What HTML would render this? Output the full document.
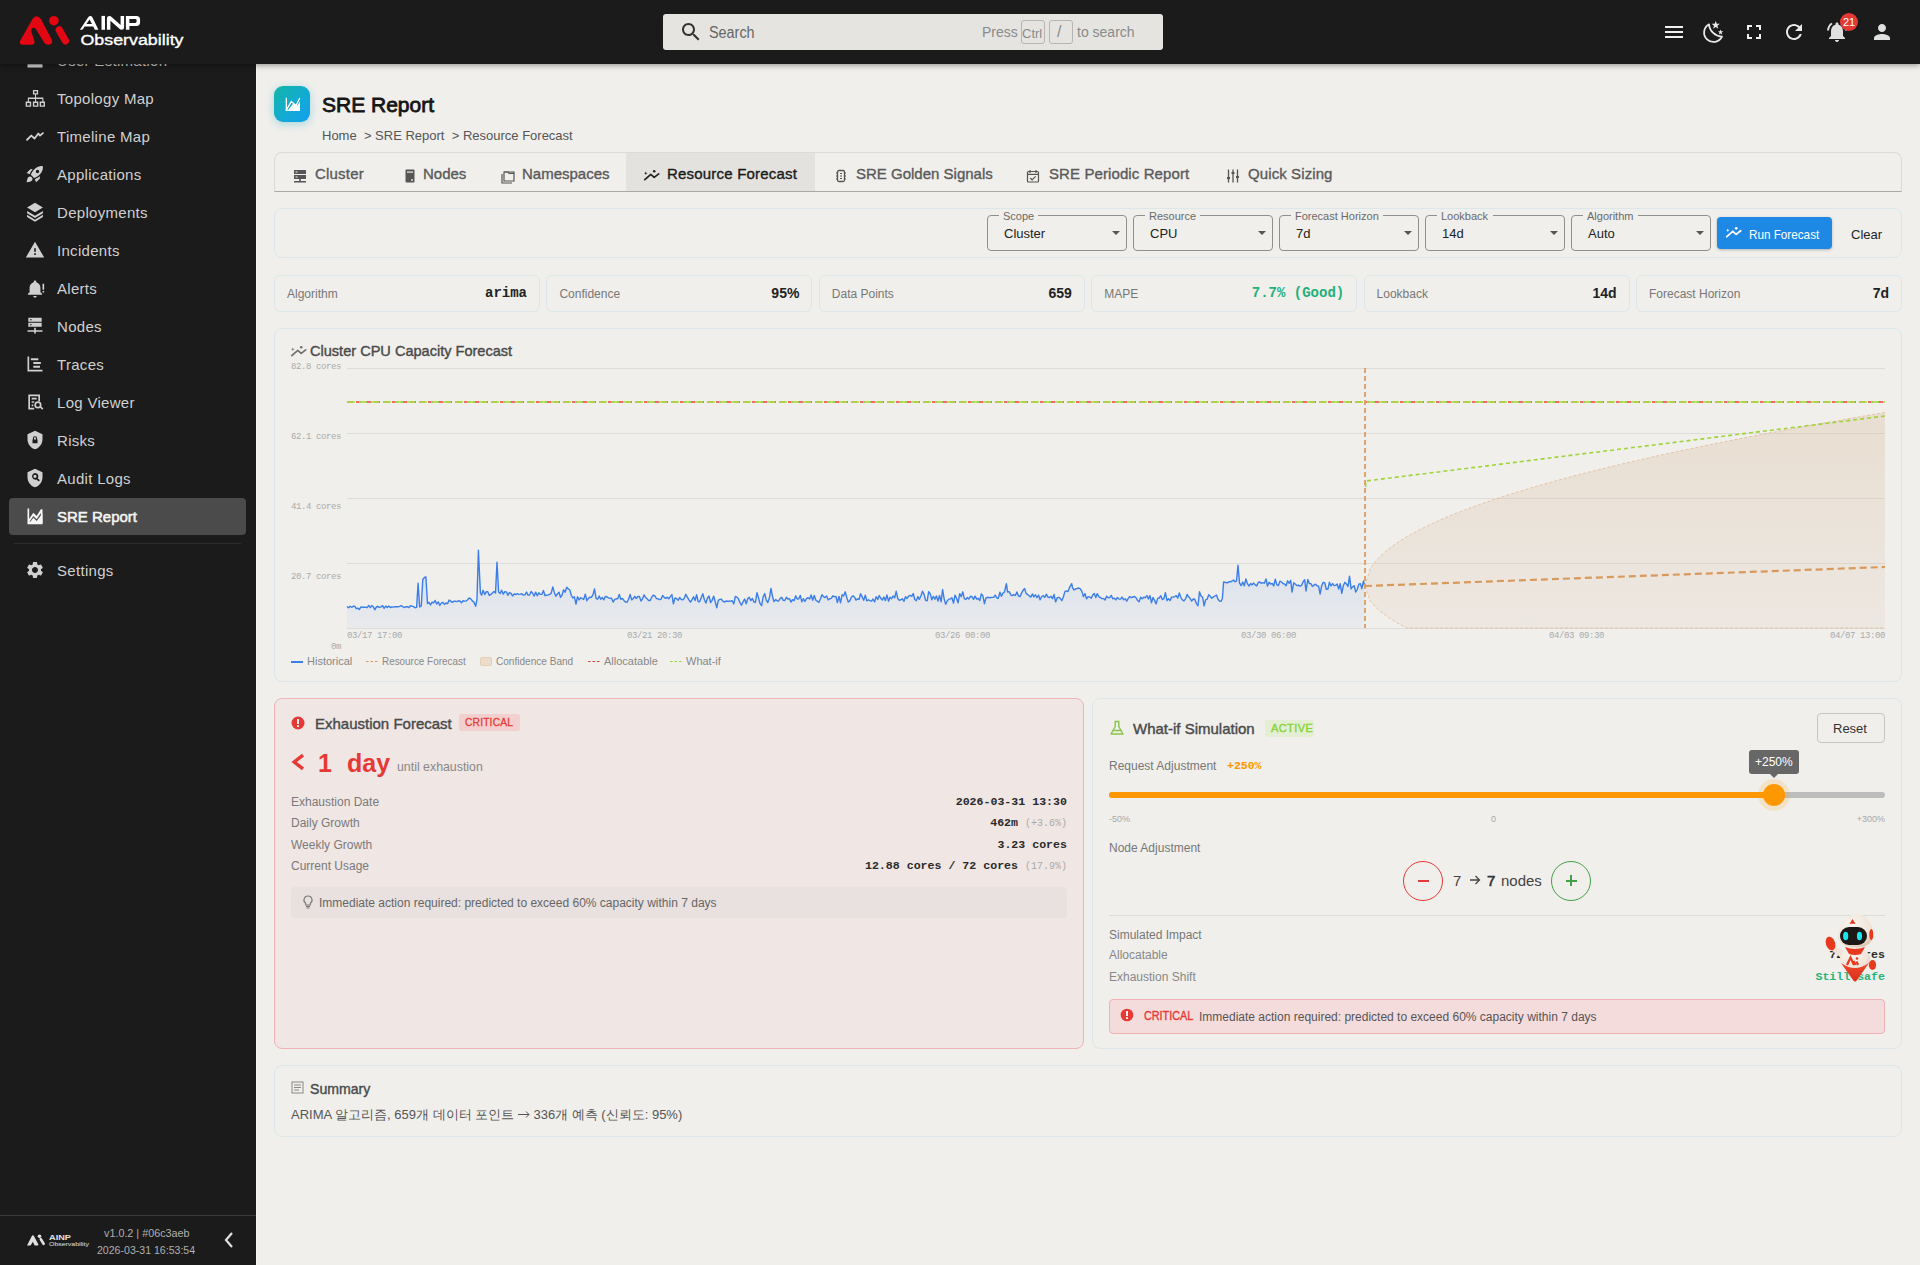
<!DOCTYPE html>
<html><head><meta charset="utf-8">
<style>
*{box-sizing:border-box;margin:0;padding:0}
html,body{width:1920px;height:1265px;overflow:hidden;background:#f0efec;font-family:"Liberation Sans",sans-serif;color:#222;position:relative}
.a{position:absolute}
.t{position:absolute;white-space:nowrap;line-height:1}
#hdr{position:absolute;left:0;top:0;width:1920px;height:64px;background:#1b1b1b;z-index:10;box-shadow:0 1px 6px rgba(0,0,0,.42)}
#side{position:absolute;left:0;top:0;width:257px;height:1265px;background:#1b1b1b;border-right:1px solid #f7f6f3;overflow:hidden}
.nav{position:absolute;left:9px;width:237px;height:36px;border-radius:4px;color:#d0d0d0;font-size:15px}
.nav svg{position:absolute;left:16px;top:8px;width:20px;height:20px;fill:#d0d0d0}
.nav span{position:absolute;left:48px;top:11px;white-space:nowrap;line-height:1;letter-spacing:.3px}
.nav.act{background:#4b4b4b;color:#f6f6f6;-webkit-text-stroke:.5px #f6f6f6}
.nav.act svg{fill:#f6f6f6}
.nav.act span{letter-spacing:0}
.card{position:absolute;border:1px solid #dce7eb;border-radius:8px}
.mono{font-family:"Liberation Mono",monospace}
.sb{-webkit-text-stroke:.4px currentColor}
.sx{transform-origin:0 50%}
</style></head>
<body>
<!-- HEADER -->
<div id="hdr">
<svg class="a" style="left:0;top:0" width="200" height="64" viewBox="0 0 200 64">
  <path d="M20 41 Q18.8 44.8 23 44.8 L31 44.8 Q35.5 44.8 34.3 40.5 L31.4 32 Q30.8 28 33.3 27.7 Q35 27.6 36.2 29.6 L44.3 42.8 Q45.5 44.8 48.2 44.8 Q53.4 44.6 51.8 39.6 L41 19.3 Q37 13.5 32.8 18.6 Z" fill="#e30613"/>
  <circle cx="53.9" cy="20.7" r="4.8" fill="#e30613"/>
  <path d="M59.3 30 L65.4 40.8" stroke="#e30613" stroke-width="7.4" stroke-linecap="round"/>
  <path d="M79.9 29.8 L88.2 17.2 Q90.3 14.6 92.4 17.2 L98.4 29.8 L94.8 29.8 L93.3 26.6 L84.6 26.6 L83.4 28.4 Q82.6 29.8 81.2 29.8Z M86.4 24 L92 24 L89.6 19.6 Z" fill="#fff" fill-rule="evenodd"/><rect x="101.5" y="15.9" width="3.5" height="13.9" fill="#fff"/><path d="M106.9 29.8 V18.4 Q106.9 15.9 109.4 15.9 Q110.8 15.9 111.6 17 L120.6 25 V15.9 H124.1 V27.4 Q124.1 29.8 121.6 29.8 Q120.3 29.8 119.4 28.8 L110.4 20.7 V29.8Z" fill="#fff"/><path d="M125.9 29.8 V15.9 H136.4 Q140.1 15.9 140.1 19.6 V22.3 Q140.1 26 136.4 26 H129.4 V29.8Z M129.4 19 V22.9 H135.3 Q136.6 22.9 136.6 21.6 V20.3 Q136.6 19 135.3 19Z" fill="#fff" fill-rule="evenodd"/>
  <text x="80.5" y="44.8" font-family="Liberation Sans" font-size="15.5" fill="#fff" stroke="#fff" stroke-width=".35" textLength="103" lengthAdjust="spacingAndGlyphs">Observability</text>
</svg>
<div class="a" style="left:663px;top:14px;width:500px;height:36px;background:#e5e4e1;border-radius:3px"></div>
<svg class="a" style="left:679px;top:20px" width="24" height="24" viewBox="0 0 24 24"><path fill="#333" d="M15.5 14h-.79l-.28-.27C15.41 12.59 16 11.11 16 9.5 16 5.91 13.09 3 9.5 3S3 5.91 3 9.5 5.91 16 9.5 16c1.610 0 3.09-.59 4.23-1.57l.27.28v.79l5 4.99L20.49 19l-4.99-5zm-6 0C7.01 14 5 11.99 5 9.5S7.01 5 9.5 5 14 7.01 14 9.5 11.99 14 9.5 14z"/></svg>
<div class="t sx" style="left:709px;top:25px;font-size:16px;color:#666;transform:scaleX(.9)">Search</div>
<div class="t" style="left:982px;top:25px;font-size:14px;color:#8a8a8a">Press</div>
<div class="a" style="left:1021px;top:20px;width:24px;height:24px;border:1px solid #b5b5b5;border-radius:3px"></div>
<div class="t" style="left:1022px;top:27px;font-size:13px;color:#8a8a8a">Ctrl</div>
<div class="a" style="left:1049px;top:20px;width:24px;height:24px;border:1px solid #b5b5b5;border-radius:3px"></div>
<div class="t" style="left:1057px;top:24px;font-size:16px;color:#8a8a8a">/</div>
<div class="t" style="left:1077px;top:25px;font-size:14px;color:#8a8a8a">to search</div>
<!-- right icons -->
<svg class="a" style="left:1662px;top:20px" width="24" height="24" viewBox="0 0 24 24"><path fill="#f0f0f0" d="M3 18h18v-2H3v2zm0-5h18v-2H3v2zm0-7v2h18V6H3z"/></svg>
<svg class="a" style="left:1702px;top:20px" width="24" height="24" viewBox="0 0 24 24"><path fill="none" stroke="#e8e8e8" stroke-width="1.8" stroke-linejoin="round" d="M7.00 4.30 A9.40 9.40 0 1 0 20.00 16.60 A13.59 13.59 0 0 1 7.00 4.30 Z"/><path fill="#e8e8e8" d="M13.70 0.90 L14.76 3.74 L17.79 3.87 L15.41 5.76 L16.23 8.68 L13.70 7.00 L11.17 8.68 L11.99 5.76 L9.61 3.87 L12.64 3.74Z M18.60 9.40 L19.31 11.23 L21.26 11.33 L19.74 12.57 L20.25 14.47 L18.60 13.40 L16.95 14.47 L17.46 12.57 L15.94 11.33 L17.89 11.23Z"/></svg>
<svg class="a" style="left:1742px;top:20px" width="24" height="24" viewBox="0 0 24 24"><path fill="#f0f0f0" d="M7 14H5v5h5v-2H7v-3zm-2-4h2V7h3V5H5v5zm12 7h-3v2h5v-5h-2v3zM14 5v2h3v3h2V5h-5z"/></svg>
<svg class="a" style="left:1782px;top:20px" width="24" height="24" viewBox="0 0 24 24"><path fill="#e8e8e8" d="M17.65 6.35C16.2 4.9 14.21 4 12 4c-4.42 0-7.99 3.580-7.99 8s3.57 8 7.99 8c3.73 0 6.84-2.55 7.73-6h-2.08c-.82 2.33-3.04 4-5.65 4-3.31 0-6-2.69-6-6s2.69-6 6-6c1.66 0 3.14.69 4.22 1.78L13 11h7V4l-2.35 2.35z"/></svg>
<svg class="a" style="left:1825px;top:20px" width="24" height="24" viewBox="0 0 24 24"><path fill="#e0e0e0" d="M7.58 4.08L6.15 2.65C3.75 4.48 2.17 7.3 2.03 10.5h2c.15-2.65 1.51-4.97 3.55-6.420zm12.39 6.42h2c-.15-3.2-1.73-6.02-4.12-7.85l-1.42 1.43c2.02 1.45 3.39 3.77 3.540 6.42zM18 11c0-3.070-1.64-5.64-4.5-6.32V4c0-.83-.67-1.5-1.5-1.5s-1.5.67-1.5 1.5v.68C7.63 5.36 6 7.92 6 11v5l-2 2v1h16v-1l-2-2v-5zm-6 11c.14 0 .27-.01.4-.04.65-.14 1.18-.58 1.44-1.18.1-.24.15-.5.15-.78h-4c.01 1.1.9 2 2.01 2z"/></svg>
<div class="a" style="left:1840px;top:13px;width:18px;height:18px;border-radius:9px;background:#e53935;color:#fff;font-size:11px;line-height:18px;text-align:center">21</div>
<svg class="a" style="left:1870px;top:20px" width="24" height="24" viewBox="0 0 24 24"><path fill="#e0e0e0" d="M12 12c2.21 0 4-1.79 4-4s-1.79-4-4-4-4 1.79-4 4 1.79 4 4 4zm0 2c-2.67 0-8 1.34-8 4v2h16v-2c0-2.66-5.33-4-8-4z"/></svg>

</div>
<!-- SIDEBAR -->
<div id="side">
<div class="nav" style="top:42px"><svg viewBox="0 0 24 24"><path d="M3 17h18v4H3zM6 9h3v7H6zM11 5h3v11h-3zM16 11h3v5h-3z"/></svg><span>User Estimation</span></div>
<div class="nav" style="top:80px"><svg viewBox="0 0 24 24"><path fill-rule="evenodd" d="M9.5 2.3H15.8V7.9H9.5Z M11.2 4.0V6.2H14.1V4.0Z M12 7.9h1.3v3.5H12z M3.4 11.4H22v1.9H3.4z M3.4 13.3h1.3v3H3.4z M12 13.3h1.3v3H12z M20.8 13.3h1.3v3h-1.3z M0.8 16.2H7.4V22.6H0.8Z M2.5 17.9V20.9H5.7V17.9Z M9.4 16.2H16.0V22.6H9.4Z M11.1 17.9V20.9H14.3V17.9Z M17.6 16.2H24.0V22.6H17.6Z M19.3 17.9V20.9H22.3V17.9Z"/></svg><span>Topology Map</span></div>
<div class="nav" style="top:118px"><svg viewBox="0 0 24 24"><path fill="none" stroke="#d0d0d0" stroke-width="2.2" stroke-linejoin="round" stroke-linecap="round" d="M2.5 16.5l5-5 4 3.5 4.5-6 2 2.5 3.5-3"/></svg><span>Timeline Map</span></div>
<div class="nav" style="top:156px"><svg viewBox="0 0 24 24"><path d="M9.19 6.35c-2.04 2.29-3.44 5.58-3.57 5.89L2 10.69l4.05-4.05c.47-.47 1.15-.68 1.81-.55l1.33.26zM11.17 17s3.74-1.55 5.89-3.7c5.4-5.4 4.5-9.62 4.21-10.57-.95-.3-5.17-1.19-10.57 4.21C8.55 9.09 7 12.83 7 12.83L11.17 17zm6.48-2.19c-2.29 2.04-5.58 3.44-5.89 3.57L13.31 22l4.05-4.05c.47-.47.68-1.150.55-1.81l-.26-1.33zM9 18c0 .83-.34 1.58-.88 2.12C6.94 21.3 2 22 2 22s.7-4.94 1.88-6.12C4.42 15.34 5.17 15 6 15c1.66 0 3 1.34 3 3zm4-9c0-1.1.9-2 2-2s2 .9 2 2-.9 2-2 2-2-.9-2-2z"/></svg><span>Applications</span></div>
<div class="nav" style="top:194px"><svg viewBox="0 0 24 24"><path d="M12 0.8 L21.5 6.6 L12 12.4 L2.5 6.6Z M2.5 10.8 L12 16.6 L21.5 10.8 V13.4 L12 19.2 L2.5 13.4Z M2.5 15.4 L12 21.2 L21.5 15.4 V18 L12 23.8 L2.5 18Z"/></svg><span>Deployments</span></div>
<div class="nav" style="top:232px"><svg viewBox="0 0 24 24"><path d="M1 21h22L12 2 1 21zm12-3h-2v-2h2v2zm0-4h-2v-4h2v4z"/></svg><span>Incidents</span></div>
<div class="nav" style="top:270px"><svg viewBox="0 0 24 24"><path d="M10 21.5c0 1.1.9 2 2 2s2-.9 2-2h-4zM12 3c-.83 0-1.5.67-1.5 1.5v.7C7.6 5.9 5.5 8.4 5.5 11.5V17l-2 2v1h17v-1l-2-2v-5.5c0-3.1-2.1-5.6-5-6.3v-.7C13.5 3.67 12.83 3 12 3z M21 7h2v7h-2z M21 15.5h2v2h-2z"/></svg><span>Alerts</span></div>
<div class="nav" style="top:308px"><svg viewBox="0 0 24 24"><path d="M4 2h16v5H4zM4 8h16v5H4zM11 14h2v3h8v2h-8v2h-2v-2H3v-2h8z"/><path fill="#1b1b1b" d="M6 4h2v1H6zM6 10h2v1H6z"/></svg><span>Nodes</span></div>
<div class="nav" style="top:346px"><svg viewBox="0 0 24 24"><path d="M3 3h2v16h16v2H3zM7 5h9v2.5H7zM10 9.5h9V12h-9zM10 14h8v2.5h-8z"/></svg><span>Traces</span></div>
<div class="nav" style="top:384px"><svg viewBox="0 0 24 24"><path d="M4 3h14v8h-2V5H6v14h5v2H4zM8 7h6v2H8zM8 11h3v2H8zM8 15h2v2H8z"/><circle cx="15.5" cy="15.5" r="3.3" fill="none" stroke="#d0d0d0" stroke-width="2"/><path d="M17.6 18.2l1.4-1.4 3 3-1.4 1.4z"/></svg><span>Log Viewer</span></div>
<div class="nav" style="top:422px"><svg viewBox="0 0 24 24"><path d="M12 1L3 5v6c0 5.55 3.84 10.74 9 12 5.16-1.26 9-6.45 9-12V5l-9-4zm3 15H9v-4.5h.5V10a2.5 2.5 0 0 1 5 0v1.5h.5V16zm-1.8-4.5V10a1.2 1.2 0 0 0-2.4 0v1.5z"/></svg><span>Risks</span></div>
<div class="nav" style="top:460px"><svg viewBox="0 0 24 24"><path d="M12 1L3 5v6c0 5.55 3.84 10.74 9 12 5.16-1.26 9-6.45 9-12V5l-9-4zm0 5a4 4 0 0 1 3.3 6.3l2.4 2.4-1.4 1.4-2.4-2.4A4 4 0 1 1 12 6zm0 2a2 2 0 1 0 0 4 2 2 0 0 0 0-4z"/></svg><span>Audit Logs</span></div>
<div class="nav act" style="top:498px;height:37px"><svg viewBox="0 0 24 24"><path d="M3 3h2v12.5l5-7.5 4 4 5-8h2v18H3zM5 19h14V8.5l-5 7.5-4-4-5 7.5z"/><path d="M5 21l5-7 4 4 7-9v12z"/></svg><span>SRE Report</span></div>
<div class="a" style="left:14px;top:543px;width:227px;height:1px;background:#2c2c2c"></div>
<div class="nav" style="top:552px"><svg viewBox="0 0 24 24"><path d="M19.14 12.94c.04-.3.06-.61.06-.94 0-.32-.02-.64-.07-.94l2.03-1.58c.18-.14.23-.41.12-.61l-1.92-3.32c-.12-.22-.37-.29-.59-.22l-2.39.96c-.5-.38-1.03-.7-1.62-.94l-.36-2.54c-.04-.24-.24-.41-.48-.41h-3.84c-.24 0-.43.17-.47.41l-.36 2.54c-.59.24-1.13.57-1.62.94l-2.39-.96c-.22-.08-.47 0-.59.22L2.74 8.87c-.12.21-.08.47.12.61l2.03 1.58c-.05.3-.09.63-.09.94s.02.64.07.94l-2.03 1.58c-.18.14-.23.41-.12.61l1.92 3.32c.12.22.37.29.59.22l2.39-.96c.5.38 1.03.7 1.62.94l.36 2.54c.05.24.24.41.48.41h3.84c.24 0 .44-.17.47-.41l.36-2.54c.59-.24 1.13-.56 1.62-.94l2.39.96c.22.08.47 0 .59-.22l1.92-3.32c.12-.22.07-.47-.12-.61l-2.01-1.58zM12 15.6c-1.98 0-3.6-1.62-3.6-3.6s1.62-3.6 3.6-3.6 3.6 1.62 3.6 3.6-1.62 3.6-3.6 3.6z"/></svg><span>Settings</span></div>
<!-- footer -->
<div class="a" style="left:0;top:1215px;width:256px;height:1px;background:#3a3a3a"></div>
<svg class="a" style="left:26px;top:1232px" width="66" height="16" viewBox="0 0 66 16">
  <path d="M1 13.6 L5.6 4.5 Q6.9 2.2 8.2 4.5 L12.3 12.3 Q12.8 13.6 11.3 13.6 L9.6 13.6 Q8.7 13.6 8.2 12.7 L6.9 9.8 L4.9 13 Q4.5 13.6 3.6 13.6 Z" fill="#e0e0e0"/>
  <circle cx="13.5" cy="4.3" r="1.8" fill="#e0e0e0"/>
  <path d="M14.8 7.2 L17.6 11.8" stroke="#e0e0e0" stroke-width="2.6" stroke-linecap="round"/>
  <text x="23" y="8" font-family="Liberation Sans" font-weight="bold" font-size="7" fill="#e0e0e0" textLength="22" lengthAdjust="spacingAndGlyphs">AINP</text>
  <text x="23" y="14" font-family="Liberation Sans" font-size="6" fill="#e0e0e0" textLength="40" lengthAdjust="spacingAndGlyphs">Observability</text>
</svg>
<div class="t sx" style="left:104px;top:1228px;font-size:11px;color:#b0b0b0;transform:scaleX(.98)">v1.0.2 | #06c3aeb</div>
<div class="t sx" style="left:97px;top:1245px;font-size:11px;color:#b0b0b0;transform:scaleX(.96)">2026-03-31 16:53:54</div>
<svg class="a" style="left:220px;top:1230px" width="18" height="20" viewBox="0 0 18 20"><path d="M12 3 L6 10 L12 17" fill="none" stroke="#e0e0e0" stroke-width="2.2"/></svg>

</div>
<!-- CONTENT -->
<!-- page title -->
<div class="a" style="left:274px;top:86px;width:36px;height:36px;border-radius:9px;background:linear-gradient(135deg,#14b5a6 0%,#13a9d6 60%,#129ff0 100%);box-shadow:0 2px 8px rgba(20,170,190,.35)"></div>
<svg class="a" style="left:284px;top:96px" width="18" height="18" viewBox="0 0 18 18"><rect x="1.7" y="1.8" width="1.3" height="13.1" fill="#fff"/><path d="M2.6 13.6 L7.3 5.6 L12 9.5 L15.8 2" fill="none" stroke="#fff" stroke-width="1.3"/><path d="M3.5 14.9 L9.2 7.6 L13.2 9.6 L16 5.6 V14.9 Z" fill="#fff"/><rect x="1.7" y="13.8" width="14.3" height="1.1" fill="#fff"/></svg>
<div class="t" style="left:322px;top:94px;font-size:21px;color:#151515;-webkit-text-stroke:.8px #151515">SRE Report</div>
<div class="t" style="left:322px;top:129px;font-size:13px;color:#555">Home &nbsp;&gt; SRE Report &nbsp;&gt; Resource Forecast</div>

<!-- tabs -->
<div class="a" style="left:274px;top:152px;width:1628px;height:40px;border:1px solid #dcdbd8;border-bottom:1px solid #a8a8a6;border-radius:8px 8px 0 0"></div>
<div class="a" style="left:626px;top:153px;width:189px;height:38px;background:#e3e2de"></div>
<svg class="a" style="left:292px;top:168px" width="16" height="16" viewBox="0 0 16 16"><path d="M2 2h12v4H2zM2 7h12v4H2zM7.2 11h1.6v2H14v1.5H2V13h5.2z" fill="#555"/><path d="M3.5 3.5h2v1h-2zM3.5 8.5h2v1h-2z" fill="#f0efec"/></svg>
<div class="t" style="left:315px;top:166px;font-size:15px;letter-spacing:.2px;color:#5a5a5a;-webkit-text-stroke:.35px #5a5a5a">Cluster</div>
<svg class="a" style="left:402px;top:168px" width="16" height="16" viewBox="0 0 16 16"><path d="M4.5 1.5h7a1 1 0 0 1 1 1v11a1 1 0 0 1-1 1h-7a1 1 0 0 1-1-1v-11a1 1 0 0 1 1-1z" fill="#555"/><path d="M5 3.5h6v1.2H5z" fill="#f0efec"/><circle cx="10" cy="12" r=".9" fill="#f0efec"/></svg>
<div class="t" style="left:423px;top:166px;font-size:15px;letter-spacing:0px;color:#5a5a5a;-webkit-text-stroke:.35px #5a5a5a">Nodes</div>
<svg class="a" style="left:500px;top:168px" width="16" height="16" viewBox="0 0 16 16"><path d="M4 4h10v9H4z M2 6v9h10" fill="none" stroke="#555" stroke-width="1.2"/><path d="M4 4h4l1 1.3h5" fill="none" stroke="#555" stroke-width="1.2"/></svg>
<div class="t" style="left:522px;top:166px;font-size:15px;letter-spacing:0px;color:#5a5a5a;-webkit-text-stroke:.35px #5a5a5a">Namespaces</div>
<svg class="a" style="left:642px;top:167px" width="20" height="16" viewBox="0 0 20 16"><path d="M2.8 12.7 L8.8 7.3 L12.2 10.3 L16.7 6.8" fill="none" stroke="#222" stroke-width="1.7" stroke-linecap="round" stroke-linejoin="round"/><circle cx="12.2" cy="4.3" r="1.3" fill="#222"/><path d="M3.8 4.6 L4.3 5.8 L5.5 6.3 L4.3 6.8 L3.8 8 L3.3 6.8 L2.1 6.3 L3.3 5.8Z" fill="#222"/></svg>
<div class="t" style="left:667px;top:166px;font-size:15px;letter-spacing:.2px;color:#1a1a1a;-webkit-text-stroke:.35px #1a1a1a">Resource Forecast</div>
<svg class="a" style="left:833px;top:168px" width="16" height="16" viewBox="0 0 16 16"><rect x="4.5" y="2.5" width="7" height="11" rx="1.5" fill="none" stroke="#555" stroke-width="1.3"/><path d="M3 5h2M3 8h2M3 11h2M11 5h2M11 8h2M11 11h2M7 5.5h2M7 8h2M7 10.5h2" stroke="#555" stroke-width="1.1"/></svg>
<div class="t" style="left:856px;top:166px;font-size:15px;letter-spacing:0px;color:#5a5a5a;-webkit-text-stroke:.35px #5a5a5a">SRE Golden Signals</div>
<svg class="a" style="left:1025px;top:168px" width="16" height="16" viewBox="0 0 16 16"><rect x="2.5" y="3.5" width="11" height="10.5" rx="1" fill="none" stroke="#555" stroke-width="1.2"/><path d="M2.5 6.3h11M5 2v3M11 2v3M5.3 10l1.8 1.8 3.5-3.5" fill="none" stroke="#555" stroke-width="1.2"/></svg>
<div class="t" style="left:1049px;top:166px;font-size:15px;letter-spacing:.1px;color:#5a5a5a;-webkit-text-stroke:.35px #5a5a5a">SRE Periodic Report</div>
<svg class="a" style="left:1225px;top:168px" width="16" height="16" viewBox="0 0 16 16"><path d="M3.5 1.5v13M8 1.5v13M12.5 1.5v13" stroke="#555" stroke-width="1.3"/><path d="M2 10h3M6.5 5h3M11 9h3" stroke="#555" stroke-width="2"/></svg>
<div class="t" style="left:1248px;top:166px;font-size:15px;letter-spacing:.1px;color:#5a5a5a;-webkit-text-stroke:.35px #5a5a5a">Quick Sizing</div>


<!-- controls -->
<div class="card" style="left:274px;top:208px;width:1628px;height:50px"></div>
<div class="a" style="left:987px;top:215px;width:140px;height:36px;border:1px solid #8f8f8f;border-radius:4px"></div>
<div class="a" style="left:999px;top:212px;width:39px;height:6px;background:#f0efec"></div>
<div class="t" style="left:1003px;top:211px;font-size:11px;color:#6a6a6a">Scope</div>
<div class="t" style="left:1004px;top:227px;font-size:13px;color:#222">Cluster</div>
<svg class="a" style="left:1112px;top:231px" width="8" height="5" viewBox="0 0 8 5"><path d="M0 0h8L4 4z" fill="#555"/></svg>
<div class="a" style="left:1133px;top:215px;width:140px;height:36px;border:1px solid #8f8f8f;border-radius:4px"></div>
<div class="a" style="left:1145px;top:212px;width:55px;height:6px;background:#f0efec"></div>
<div class="t" style="left:1149px;top:211px;font-size:11px;color:#6a6a6a">Resource</div>
<div class="t" style="left:1150px;top:227px;font-size:13px;color:#222">CPU</div>
<svg class="a" style="left:1258px;top:231px" width="8" height="5" viewBox="0 0 8 5"><path d="M0 0h8L4 4z" fill="#555"/></svg>
<div class="a" style="left:1279px;top:215px;width:140px;height:36px;border:1px solid #8f8f8f;border-radius:4px"></div>
<div class="a" style="left:1291px;top:212px;width:92px;height:6px;background:#f0efec"></div>
<div class="t" style="left:1295px;top:211px;font-size:11px;color:#6a6a6a">Forecast Horizon</div>
<div class="t" style="left:1296px;top:227px;font-size:13px;color:#222">7d</div>
<svg class="a" style="left:1404px;top:231px" width="8" height="5" viewBox="0 0 8 5"><path d="M0 0h8L4 4z" fill="#555"/></svg>
<div class="a" style="left:1425px;top:215px;width:140px;height:36px;border:1px solid #8f8f8f;border-radius:4px"></div>
<div class="a" style="left:1437px;top:212px;width:56px;height:6px;background:#f0efec"></div>
<div class="t" style="left:1441px;top:211px;font-size:11px;color:#6a6a6a">Lookback</div>
<div class="t" style="left:1442px;top:227px;font-size:13px;color:#222">14d</div>
<svg class="a" style="left:1550px;top:231px" width="8" height="5" viewBox="0 0 8 5"><path d="M0 0h8L4 4z" fill="#555"/></svg>
<div class="a" style="left:1571px;top:215px;width:140px;height:36px;border:1px solid #8f8f8f;border-radius:4px"></div>
<div class="a" style="left:1583px;top:212px;width:55px;height:6px;background:#f0efec"></div>
<div class="t" style="left:1587px;top:211px;font-size:11px;color:#6a6a6a">Algorithm</div>
<div class="t" style="left:1588px;top:227px;font-size:13px;color:#222">Auto</div>
<svg class="a" style="left:1696px;top:231px" width="8" height="5" viewBox="0 0 8 5"><path d="M0 0h8L4 4z" fill="#555"/></svg>

<div class="a" style="left:1717px;top:217px;width:115px;height:32px;background:#1e88e5;border-radius:4px;box-shadow:0 1px 3px rgba(0,0,0,.25)"></div>
<svg class="a" style="left:1724px;top:224px" width="20" height="16" viewBox="0 0 20 16"><path d="M2.8 12.7 L8.8 7.3 L12.2 10.3 L16.7 6.8" fill="none" stroke="#fff" stroke-width="1.8" stroke-linecap="round" stroke-linejoin="round"/><circle cx="12.2" cy="4.3" r="1.4" fill="#fff"/><path d="M3.8 4.6 L4.3 5.8 L5.5 6.3 L4.3 6.8 L3.8 8 L3.3 6.8 L2.1 6.3 L3.3 5.8Z" fill="#fff"/></svg>
<div class="t sx" style="left:1749px;top:228px;font-size:13px;color:#fff;transform:scaleX(.9)">Run Forecast</div>
<div class="t" style="left:1851px;top:228px;font-size:13px;color:#222">Clear</div>

<!-- stats -->
<div class="card" style="left:274.0px;top:275px;width:266px;height:37px;border-radius:6px"></div>
<div class="t" style="left:287.0px;top:288px;font-size:12px;color:#777">Algorithm</div>
<div class="t" style="left:287.0px;top:286px;width:240px;text-align:right;font-size:14px;font-weight:bold;color:#222;font-family:'Liberation Mono',monospace;">arima</div>
<div class="card" style="left:546.4px;top:275px;width:266px;height:37px;border-radius:6px"></div>
<div class="t" style="left:559.4px;top:288px;font-size:12px;color:#777">Confidence</div>
<div class="t" style="left:559.4px;top:286px;width:240px;text-align:right;font-size:14px;font-weight:bold;color:#222;">95%</div>
<div class="card" style="left:818.8px;top:275px;width:266px;height:37px;border-radius:6px"></div>
<div class="t" style="left:831.8px;top:288px;font-size:12px;color:#777">Data Points</div>
<div class="t" style="left:831.8px;top:286px;width:240px;text-align:right;font-size:14px;font-weight:bold;color:#222;">659</div>
<div class="card" style="left:1091.2px;top:275px;width:266px;height:37px;border-radius:6px"></div>
<div class="t" style="left:1104.2px;top:288px;font-size:12px;color:#777">MAPE</div>
<div class="t" style="left:1104.2px;top:286px;width:240px;text-align:right;font-size:14px;font-weight:bold;color:#22b07a;font-family:'Liberation Mono',monospace;">7.7% (Good)</div>
<div class="card" style="left:1363.6px;top:275px;width:266px;height:37px;border-radius:6px"></div>
<div class="t" style="left:1376.6px;top:288px;font-size:12px;color:#777">Lookback</div>
<div class="t" style="left:1376.6px;top:286px;width:240px;text-align:right;font-size:14px;font-weight:bold;color:#222;">14d</div>
<div class="card" style="left:1636.0px;top:275px;width:266px;height:37px;border-radius:6px"></div>
<div class="t" style="left:1649.0px;top:288px;font-size:12px;color:#777">Forecast Horizon</div>
<div class="t" style="left:1649.0px;top:286px;width:240px;text-align:right;font-size:14px;font-weight:bold;color:#222;">7d</div>


<!-- chart card -->
<div class="card" style="left:274px;top:328px;width:1628px;height:354px"></div>
<svg class="a" style="left:288.6px;top:343px" width="20" height="16" viewBox="0 0 20 16"><path d="M2.8 12.7 L8.8 7.3 L12.2 10.3 L16.7 6.8" fill="none" stroke="#707070" stroke-width="1.7" stroke-linecap="round" stroke-linejoin="round"/><circle cx="12.2" cy="4.3" r="1.3" fill="#707070"/><path d="M3.8 4.6 L4.3 5.8 L5.5 6.3 L4.3 6.8 L3.8 8 L3.3 6.8 L2.1 6.3 L3.3 5.8Z" fill="#707070"/></svg>
<div class="t sb sx" style="left:310px;top:343px;font-size:15px;color:#4a4a4a;transform:scaleX(.97)">Cluster CPU Capacity Forecast</div>
<svg class="a" style="left:0;top:0" width="1920" height="700" viewBox="0 0 1920 700">
<defs><linearGradient id="hg" x1="0" y1="0" x2="0" y2="1"><stop offset="0" stop-color="#5b8def" stop-opacity=".16"/><stop offset="1" stop-color="#5b8def" stop-opacity=".05"/></linearGradient><linearGradient id="bg" gradientUnits="userSpaceOnUse" x1="0" y1="413" x2="0" y2="628"><stop offset="0" stop-color="#d8b896" stop-opacity=".32"/><stop offset="1" stop-color="#dcc0a8" stop-opacity=".16"/></linearGradient></defs>
<line x1="347" x2="1885" y1="368.5" y2="368.5" stroke="#dddcd8" stroke-width="1"/>
<line x1="347" x2="1885" y1="433.5" y2="433.5" stroke="#dddcd8" stroke-width="1"/>
<line x1="347" x2="1885" y1="498.5" y2="498.5" stroke="#dddcd8" stroke-width="1"/>
<line x1="347" x2="1885" y1="563.5" y2="563.5" stroke="#dddcd8" stroke-width="1"/>
<line x1="347" x2="1885" y1="628.5" y2="628.5" stroke="#dddcd8" stroke-width="1"/>
<path d="M347.0 606.4 L348.5 607.8 L350.1 606.2 L351.6 607.3 L353.2 606.3 L354.7 606.2 L356.3 608.7 L357.8 608.1 L359.4 609.5 L360.9 606.9 L362.5 607.2 L364.0 607.2 L365.6 607.3 L367.1 607.6 L368.7 605.4 L370.2 607.6 L371.8 605.6 L373.3 606.9 L374.8 609.8 L376.4 606.8 L377.9 606.5 L379.5 607.3 L381.0 606.8 L382.6 605.7 L384.1 608.3 L385.7 606.1 L387.2 607.4 L388.8 606.0 L390.3 607.6 L391.9 607.0 L393.4 607.1 L395.0 606.8 L396.5 606.8 L398.1 606.7 L399.6 606.4 L401.1 605.7 L402.7 606.7 L404.2 607.5 L405.8 606.8 L407.3 606.7 L408.9 607.6 L410.4 605.7 L412.0 606.1 L413.5 606.6 L415.1 607.8 L416.6 607.4 L418.1 583.3 L419.6 607.0 L421.3 605.9 L422.8 579.5 L424.4 577.5 L425.9 577.0 L427.5 603.6 L429.0 602.4 L430.5 605.0 L432.1 602.1 L433.6 602.9 L435.2 600.4 L436.7 604.0 L438.3 601.8 L439.8 605.4 L441.4 603.2 L442.9 602.3 L444.5 604.4 L446.0 603.0 L447.6 603.7 L449.1 600.0 L450.7 601.1 L452.2 602.4 L453.8 601.3 L455.3 601.2 L456.8 601.6 L458.4 600.8 L459.9 601.0 L461.5 602.7 L463.0 600.8 L464.6 601.1 L466.1 601.0 L467.7 599.8 L469.2 597.9 L470.8 598.8 L472.3 600.9 L473.9 602.1 L475.7 606.3 L477.0 599.2 L478.4 550.2 L480.4 592.8 L481.6 595.2 L483.1 590.3 L484.7 594.6 L486.2 591.8 L487.8 591.8 L489.3 595.4 L490.9 594.4 L492.4 592.9 L494.0 591.4 L495.5 593.1 L497.0 562.3 L498.6 591.9 L500.2 593.4 L501.7 590.2 L503.3 594.2 L504.8 591.6 L506.4 591.9 L507.9 595.3 L509.4 592.5 L511.0 593.4 L512.5 596.0 L514.1 593.8 L515.6 594.6 L517.2 593.7 L518.7 594.4 L520.3 594.1 L521.8 593.7 L523.4 595.1 L524.9 594.9 L526.5 592.0 L528.0 595.1 L529.6 595.0 L531.1 591.5 L532.7 593.2 L534.2 596.1 L535.7 592.1 L537.3 595.8 L538.8 592.8 L540.4 594.4 L541.9 594.4 L543.5 590.6 L545.0 595.5 L546.6 595.2 L548.1 594.9 L549.7 594.4 L551.2 593.2 L552.8 586.9 L554.3 592.4 L555.9 596.2 L557.4 594.0 L559.0 592.2 L560.5 597.3 L562.0 595.2 L563.6 589.8 L565.1 592.2 L566.7 587.3 L568.2 588.8 L569.8 590.0 L571.3 595.3 L572.9 598.0 L574.4 596.8 L576.0 604.0 L577.5 596.7 L579.1 599.9 L580.6 597.7 L582.2 598.6 L583.7 599.4 L585.3 594.2 L586.8 600.7 L588.3 598.5 L589.9 597.1 L591.4 597.4 L593.0 594.6 L594.5 588.9 L596.1 598.3 L597.6 599.2 L599.2 596.1 L600.7 599.3 L602.3 597.4 L603.8 599.8 L605.4 596.4 L606.9 596.8 L608.5 597.8 L610.0 598.3 L611.6 598.3 L613.1 602.1 L614.7 599.3 L616.2 598.8 L617.7 598.8 L619.3 594.4 L620.8 599.3 L622.4 598.4 L623.9 600.4 L625.5 602.1 L627.0 602.3 L628.6 599.2 L630.1 594.4 L631.7 599.9 L633.2 598.5 L634.8 596.3 L636.3 598.5 L637.9 596.4 L639.4 596.5 L641.0 601.0 L642.5 598.8 L644.0 594.9 L645.6 597.5 L647.1 598.8 L648.7 600.5 L650.2 600.5 L651.8 597.0 L653.3 595.2 L654.9 595.9 L656.4 598.5 L658.0 598.9 L659.5 599.7 L661.1 599.1 L662.6 595.4 L664.2 597.3 L665.7 598.3 L667.3 597.2 L668.8 598.8 L670.3 596.6 L671.9 594.6 L673.4 603.8 L675.0 598.0 L676.5 598.6 L678.1 600.3 L679.6 597.6 L681.2 599.3 L682.7 599.9 L684.3 598.2 L685.8 594.3 L687.4 597.1 L688.9 599.8 L690.5 602.2 L692.0 599.7 L693.6 596.8 L695.1 600.5 L696.6 594.7 L698.2 601.7 L699.7 601.6 L701.3 597.6 L702.8 593.7 L704.4 599.8 L705.9 603.0 L707.5 598.0 L709.0 596.0 L710.6 602.5 L712.1 600.3 L713.7 596.1 L715.2 601.7 L716.8 607.7 L718.3 600.4 L719.9 599.4 L721.4 599.3 L722.9 601.2 L724.5 602.1 L726.0 601.0 L727.6 601.3 L729.1 601.2 L730.7 601.0 L732.2 600.7 L733.8 603.9 L735.3 596.5 L736.9 597.1 L738.4 598.8 L740.0 602.7 L741.5 605.2 L743.1 601.7 L744.6 599.0 L746.2 603.8 L747.7 598.7 L749.2 597.2 L750.8 600.6 L752.3 598.4 L753.9 602.0 L755.4 602.4 L757.0 592.7 L758.5 597.9 L760.1 603.7 L761.6 605.7 L763.2 596.7 L764.7 593.5 L766.3 600.2 L767.8 602.6 L769.4 598.0 L771.0 588.4 L772.5 596.5 L774.0 601.5 L775.6 599.7 L777.1 600.7 L778.6 601.0 L780.2 598.3 L781.7 597.3 L783.3 600.4 L784.8 600.5 L786.4 597.2 L787.9 599.1 L789.5 598.6 L791.0 602.1 L792.6 599.7 L794.1 600.7 L795.7 595.8 L797.2 599.0 L798.8 598.8 L800.3 595.4 L801.9 601.8 L803.4 598.7 L804.9 601.5 L806.5 598.6 L808.0 597.7 L809.6 598.9 L811.1 595.0 L812.7 600.2 L814.2 595.4 L815.8 600.1 L817.3 601.2 L818.9 602.3 L820.4 599.0 L822.0 594.7 L823.5 596.6 L825.1 597.6 L826.6 596.1 L828.2 599.9 L829.7 598.8 L831.2 598.4 L832.8 596.0 L834.3 596.6 L835.9 596.5 L837.4 602.6 L839.0 596.4 L840.5 602.8 L842.1 594.7 L843.6 595.9 L845.2 591.8 L846.7 597.2 L848.3 602.0 L849.8 600.9 L851.4 597.2 L852.9 595.9 L854.5 597.0 L856.0 600.1 L857.5 598.8 L859.1 599.3 L860.6 593.7 L862.2 596.9 L863.7 600.3 L865.3 595.1 L866.8 600.8 L868.4 599.8 L869.9 600.6 L871.5 601.1 L873.0 599.0 L874.6 601.9 L876.1 596.7 L877.7 599.5 L879.2 595.5 L880.8 598.3 L882.3 600.1 L883.8 597.0 L885.4 600.6 L886.9 595.0 L888.5 601.2 L890.0 597.3 L891.6 598.8 L893.1 595.9 L894.7 597.7 L896.2 591.3 L897.8 598.7 L899.3 600.2 L900.9 599.8 L902.4 598.7 L904.0 601.3 L905.5 596.6 L907.1 598.5 L908.6 596.1 L910.1 595.4 L911.7 596.3 L913.2 593.5 L914.8 599.5 L916.3 600.7 L917.9 596.6 L919.4 599.3 L921.0 595.8 L922.5 591.2 L924.1 594.6 L925.6 600.4 L927.2 600.7 L928.7 591.7 L930.3 593.9 L931.8 599.7 L933.4 596.3 L934.9 599.3 L936.4 596.0 L938.0 601.0 L939.5 595.4 L941.1 601.7 L942.6 589.5 L944.2 599.1 L945.7 604.2 L947.3 600.7 L948.8 599.3 L950.4 598.9 L951.9 597.7 L953.5 603.0 L955.0 595.1 L956.6 598.4 L958.1 602.8 L959.7 593.6 L961.2 596.7 L962.8 591.8 L964.3 598.7 L965.8 599.5 L967.4 597.5 L968.9 598.9 L970.5 596.3 L972.0 596.7 L973.6 599.3 L975.1 596.1 L976.7 599.1 L978.2 598.3 L979.8 600.6 L981.3 593.9 L982.9 595.8 L984.4 603.7 L986.0 597.8 L987.5 597.3 L989.1 597.7 L990.6 597.5 L992.1 597.4 L993.7 597.3 L995.2 595.1 L996.8 598.0 L998.3 598.2 L999.9 592.1 L1001.4 596.3 L1003.0 593.1 L1004.5 592.0 L1006.4 583.7 L1007.6 592.0 L1009.2 591.6 L1010.7 594.8 L1012.3 595.6 L1013.8 594.6 L1015.4 595.5 L1016.9 591.9 L1018.4 595.8 L1020.0 596.6 L1021.5 593.2 L1023.1 590.2 L1024.6 588.5 L1026.2 593.6 L1027.7 594.4 L1029.3 595.9 L1030.8 597.1 L1032.4 593.9 L1033.9 596.9 L1035.5 594.7 L1037.0 597.7 L1038.6 595.1 L1040.1 599.8 L1041.7 596.5 L1043.2 595.6 L1044.7 597.4 L1046.3 594.2 L1047.8 597.0 L1049.4 597.5 L1050.9 596.2 L1052.5 598.7 L1054.0 594.5 L1055.6 601.9 L1057.1 598.0 L1058.7 597.3 L1060.2 598.4 L1061.8 600.6 L1063.3 597.2 L1064.9 591.6 L1066.4 590.9 L1068.0 591.5 L1069.5 587.7 L1071.7 583.7 L1072.6 587.8 L1074.1 590.0 L1075.7 588.7 L1077.2 588.5 L1078.8 588.0 L1080.3 588.8 L1081.9 591.4 L1083.4 596.6 L1085.0 593.5 L1086.5 598.9 L1088.1 596.6 L1089.6 597.0 L1091.2 598.2 L1092.7 595.1 L1094.3 593.6 L1095.8 597.5 L1097.3 593.6 L1098.9 596.8 L1100.4 597.5 L1102.0 598.6 L1103.5 598.6 L1105.1 600.1 L1106.6 596.1 L1108.2 597.9 L1109.7 597.5 L1111.3 595.4 L1112.8 598.8 L1114.4 598.2 L1115.9 599.9 L1117.5 597.4 L1119.0 599.1 L1120.6 599.1 L1122.1 597.0 L1123.7 599.8 L1125.2 598.7 L1126.7 601.1 L1128.3 598.4 L1129.8 596.5 L1131.4 597.7 L1132.9 597.0 L1134.5 596.5 L1136.0 597.7 L1137.6 600.4 L1139.1 601.8 L1140.7 597.1 L1142.2 598.8 L1143.8 597.3 L1145.3 597.6 L1146.9 595.6 L1148.4 599.0 L1150.0 595.6 L1151.5 602.8 L1153.0 597.5 L1154.6 600.4 L1156.1 603.9 L1157.7 598.4 L1159.2 598.0 L1160.8 595.7 L1162.3 599.5 L1163.9 598.7 L1165.4 592.6 L1167.0 600.6 L1168.5 598.8 L1170.1 600.6 L1171.6 597.1 L1173.2 597.0 L1174.7 596.6 L1176.3 595.7 L1177.8 598.0 L1179.3 592.9 L1180.9 597.6 L1182.4 599.8 L1184.0 600.9 L1185.5 598.9 L1187.1 594.5 L1188.6 596.8 L1190.2 598.5 L1191.7 601.2 L1193.3 599.0 L1194.8 599.3 L1196.4 603.6 L1198.0 605.8 L1199.5 591.7 L1201.0 595.9 L1202.6 597.2 L1204.1 605.8 L1205.6 599.9 L1207.2 599.1 L1208.7 594.8 L1210.3 596.3 L1211.8 598.3 L1213.4 596.9 L1214.9 596.0 L1216.5 595.1 L1218.0 599.2 L1219.6 601.0 L1221.1 601.2 L1222.4 598.5 L1223.6 582.0 L1225.8 582.5 L1227.3 582.9 L1228.9 581.8 L1230.4 581.7 L1231.9 581.3 L1233.5 580.0 L1235.0 581.8 L1236.5 581.0 L1238.0 565.2 L1239.5 583.0 L1241.2 585.6 L1242.8 582.0 L1244.3 585.9 L1245.9 578.9 L1247.4 583.6 L1249.0 586.1 L1250.5 583.5 L1252.1 584.9 L1253.6 583.0 L1255.2 584.9 L1256.7 585.9 L1258.2 582.5 L1259.8 582.0 L1261.3 583.3 L1262.9 582.7 L1264.4 583.2 L1266.0 579.0 L1267.5 586.0 L1269.1 582.2 L1270.6 584.0 L1272.2 583.4 L1273.7 586.0 L1275.3 579.1 L1276.8 584.6 L1278.4 585.6 L1279.9 581.1 L1281.5 582.0 L1283.0 583.5 L1284.6 584.1 L1286.1 585.7 L1287.6 580.8 L1289.2 583.3 L1290.7 580.4 L1292.0 592.0 L1293.8 582.7 L1295.4 584.2 L1296.9 585.6 L1298.5 585.2 L1300.0 586.1 L1301.6 585.3 L1303.1 581.7 L1304.7 579.8 L1306.0 591.0 L1307.8 579.5 L1309.3 583.6 L1310.9 583.6 L1312.4 586.4 L1313.9 585.2 L1315.5 584.2 L1317.0 585.8 L1318.6 586.2 L1320.1 594.1 L1321.7 585.5 L1323.2 582.3 L1324.8 583.0 L1326.3 589.4 L1327.9 589.0 L1329.4 582.3 L1331.0 586.0 L1332.5 583.5 L1334.1 585.6 L1335.6 585.4 L1337.2 584.0 L1338.7 589.1 L1340.2 583.7 L1341.8 593.4 L1343.3 585.7 L1344.9 582.3 L1346.4 583.9 L1348.0 586.4 L1349.5 576.2 L1351.1 588.8 L1352.6 586.9 L1354.2 585.7 L1355.7 592.0 L1357.3 589.3 L1358.8 584.2 L1360.4 583.6 L1361.9 588.7 L1363.5 580.9 L1365.0 587.4 L1365.0 628 L347 628 Z" fill="url(#hg)"/>
<path d="M1365.0 586.0 L1370.2 568.6 L1375.4 561.5 L1380.6 555.9 L1385.8 551.3 L1391.0 547.2 L1396.2 543.5 L1401.4 540.1 L1406.6 536.9 L1411.8 533.9 L1417.0 531.1 L1422.2 528.4 L1427.4 525.9 L1432.6 523.4 L1437.8 521.1 L1443.0 518.8 L1448.2 516.6 L1453.4 514.4 L1458.6 512.4 L1463.8 510.4 L1469.0 508.4 L1474.2 506.5 L1479.4 504.6 L1484.6 502.8 L1489.8 501.0 L1495.0 499.2 L1500.2 497.5 L1505.4 495.8 L1510.6 494.2 L1515.8 492.5 L1521.0 491.0 L1526.2 489.4 L1531.4 487.8 L1536.6 486.3 L1541.8 484.8 L1547.0 483.3 L1552.2 481.9 L1557.4 480.4 L1562.6 479.0 L1567.8 477.6 L1573.0 476.2 L1578.2 474.9 L1583.4 473.5 L1588.6 472.2 L1593.8 470.9 L1599.0 469.6 L1604.2 468.3 L1609.4 467.0 L1614.6 465.8 L1619.8 464.5 L1625.0 463.3 L1630.2 462.1 L1635.4 460.9 L1640.6 459.7 L1645.8 458.5 L1651.0 457.3 L1656.2 456.1 L1661.4 455.0 L1666.6 453.8 L1671.8 452.7 L1677.0 451.6 L1682.2 450.5 L1687.4 449.4 L1692.6 448.3 L1697.8 447.2 L1703.0 446.1 L1708.2 445.0 L1713.4 444.0 L1718.6 442.9 L1723.8 441.9 L1729.0 440.8 L1734.2 439.8 L1739.4 438.8 L1744.6 437.7 L1749.8 436.7 L1755.0 435.7 L1760.2 434.7 L1765.4 433.7 L1770.6 432.7 L1775.8 431.8 L1781.0 430.8 L1786.2 429.8 L1791.4 428.9 L1796.6 427.9 L1801.8 427.0 L1807.0 426.0 L1812.2 425.1 L1817.4 424.1 L1822.6 423.2 L1827.8 422.3 L1833.0 421.4 L1838.2 420.5 L1843.4 419.6 L1848.6 418.6 L1853.8 417.8 L1859.0 416.9 L1864.2 416.0 L1869.4 415.1 L1874.6 414.2 L1879.8 413.3 L1885.0 412.5 L1885.0 628.0 L1879.8 628.0 L1874.6 628.0 L1869.4 628.0 L1864.2 628.0 L1859.0 628.0 L1853.8 628.0 L1848.6 628.0 L1843.4 628.0 L1838.2 628.0 L1833.0 628.0 L1827.8 628.0 L1822.6 628.0 L1817.4 628.0 L1812.2 628.0 L1807.0 628.0 L1801.8 628.0 L1796.6 628.0 L1791.4 628.0 L1786.2 628.0 L1781.0 628.0 L1775.8 628.0 L1770.6 628.0 L1765.4 628.0 L1760.2 628.0 L1755.0 628.0 L1749.8 628.0 L1744.6 628.0 L1739.4 628.0 L1734.2 628.0 L1729.0 628.0 L1723.8 628.0 L1718.6 628.0 L1713.4 628.0 L1708.2 628.0 L1703.0 628.0 L1697.8 628.0 L1692.6 628.0 L1687.4 628.0 L1682.2 628.0 L1677.0 628.0 L1671.8 628.0 L1666.6 628.0 L1661.4 628.0 L1656.2 628.0 L1651.0 628.0 L1645.8 628.0 L1640.6 628.0 L1635.4 628.0 L1630.2 628.0 L1625.0 628.0 L1619.8 628.0 L1614.6 628.0 L1609.4 628.0 L1604.2 628.0 L1599.0 628.0 L1593.8 628.0 L1588.6 628.0 L1583.4 628.0 L1578.2 628.0 L1573.0 628.0 L1567.8 628.0 L1562.6 628.0 L1557.4 628.0 L1552.2 628.0 L1547.0 628.0 L1541.8 628.0 L1536.6 628.0 L1531.4 628.0 L1526.2 628.0 L1521.0 628.0 L1515.8 628.0 L1510.6 628.0 L1505.4 628.0 L1500.2 628.0 L1495.0 628.0 L1489.8 628.0 L1484.6 628.0 L1479.4 628.0 L1474.2 628.0 L1469.0 628.0 L1463.8 628.0 L1458.6 628.0 L1453.4 628.0 L1448.2 628.0 L1443.0 628.0 L1437.8 628.0 L1432.6 628.0 L1427.4 628.0 L1422.2 628.0 L1417.0 628.0 L1411.8 628.0 L1406.6 627.9 L1401.4 625.2 L1396.2 622.3 L1391.0 619.1 L1385.8 615.6 L1380.6 611.7 L1375.4 607.0 L1370.2 600.8 L1365.0 586.0 Z" fill="url(#bg)"/>
<path d="M1365.0 586.0 L1370.2 568.6 L1375.4 561.5 L1380.6 555.9 L1385.8 551.3 L1391.0 547.2 L1396.2 543.5 L1401.4 540.1 L1406.6 536.9 L1411.8 533.9 L1417.0 531.1 L1422.2 528.4 L1427.4 525.9 L1432.6 523.4 L1437.8 521.1 L1443.0 518.8 L1448.2 516.6 L1453.4 514.4 L1458.6 512.4 L1463.8 510.4 L1469.0 508.4 L1474.2 506.5 L1479.4 504.6 L1484.6 502.8 L1489.8 501.0 L1495.0 499.2 L1500.2 497.5 L1505.4 495.8 L1510.6 494.2 L1515.8 492.5 L1521.0 491.0 L1526.2 489.4 L1531.4 487.8 L1536.6 486.3 L1541.8 484.8 L1547.0 483.3 L1552.2 481.9 L1557.4 480.4 L1562.6 479.0 L1567.8 477.6 L1573.0 476.2 L1578.2 474.9 L1583.4 473.5 L1588.6 472.2 L1593.8 470.9 L1599.0 469.6 L1604.2 468.3 L1609.4 467.0 L1614.6 465.8 L1619.8 464.5 L1625.0 463.3 L1630.2 462.1 L1635.4 460.9 L1640.6 459.7 L1645.8 458.5 L1651.0 457.3 L1656.2 456.1 L1661.4 455.0 L1666.6 453.8 L1671.8 452.7 L1677.0 451.6 L1682.2 450.5 L1687.4 449.4 L1692.6 448.3 L1697.8 447.2 L1703.0 446.1 L1708.2 445.0 L1713.4 444.0 L1718.6 442.9 L1723.8 441.9 L1729.0 440.8 L1734.2 439.8 L1739.4 438.8 L1744.6 437.7 L1749.8 436.7 L1755.0 435.7 L1760.2 434.7 L1765.4 433.7 L1770.6 432.7 L1775.8 431.8 L1781.0 430.8 L1786.2 429.8 L1791.4 428.9 L1796.6 427.9 L1801.8 427.0 L1807.0 426.0 L1812.2 425.1 L1817.4 424.1 L1822.6 423.2 L1827.8 422.3 L1833.0 421.4 L1838.2 420.5 L1843.4 419.6 L1848.6 418.6 L1853.8 417.8 L1859.0 416.9 L1864.2 416.0 L1869.4 415.1 L1874.6 414.2 L1879.8 413.3 L1885.0 412.5" fill="none" stroke="#e2b48c" stroke-opacity=".7" stroke-width="1" stroke-dasharray="3 2"/>
<path d="M1365.0 586.0 L1370.2 600.8 L1375.4 607.0 L1380.6 611.7 L1385.8 615.6 L1391.0 619.1 L1396.2 622.3 L1401.4 625.2 L1406.6 627.9 L1411.8 628.0 L1417.0 628.0 L1422.2 628.0 L1427.4 628.0 L1432.6 628.0 L1437.8 628.0 L1443.0 628.0 L1448.2 628.0 L1453.4 628.0 L1458.6 628.0 L1463.8 628.0 L1469.0 628.0 L1474.2 628.0 L1479.4 628.0 L1484.6 628.0 L1489.8 628.0 L1495.0 628.0 L1500.2 628.0 L1505.4 628.0 L1510.6 628.0 L1515.8 628.0 L1521.0 628.0 L1526.2 628.0 L1531.4 628.0 L1536.6 628.0 L1541.8 628.0 L1547.0 628.0 L1552.2 628.0 L1557.4 628.0 L1562.6 628.0 L1567.8 628.0 L1573.0 628.0 L1578.2 628.0 L1583.4 628.0 L1588.6 628.0 L1593.8 628.0 L1599.0 628.0 L1604.2 628.0 L1609.4 628.0 L1614.6 628.0 L1619.8 628.0 L1625.0 628.0 L1630.2 628.0 L1635.4 628.0 L1640.6 628.0 L1645.8 628.0 L1651.0 628.0 L1656.2 628.0 L1661.4 628.0 L1666.6 628.0 L1671.8 628.0 L1677.0 628.0 L1682.2 628.0 L1687.4 628.0 L1692.6 628.0 L1697.8 628.0 L1703.0 628.0 L1708.2 628.0 L1713.4 628.0 L1718.6 628.0 L1723.8 628.0 L1729.0 628.0 L1734.2 628.0 L1739.4 628.0 L1744.6 628.0 L1749.8 628.0 L1755.0 628.0 L1760.2 628.0 L1765.4 628.0 L1770.6 628.0 L1775.8 628.0 L1781.0 628.0 L1786.2 628.0 L1791.4 628.0 L1796.6 628.0 L1801.8 628.0 L1807.0 628.0 L1812.2 628.0 L1817.4 628.0 L1822.6 628.0 L1827.8 628.0 L1833.0 628.0 L1838.2 628.0 L1843.4 628.0 L1848.6 628.0 L1853.8 628.0 L1859.0 628.0 L1864.2 628.0 L1869.4 628.0 L1874.6 628.0 L1879.8 628.0 L1885.0 628.0" fill="none" stroke="#e2b48c" stroke-opacity=".7" stroke-width="1" stroke-dasharray="3 2"/>
<path d="M347.0 606.4 L348.5 607.8 L350.1 606.2 L351.6 607.3 L353.2 606.3 L354.7 606.2 L356.3 608.7 L357.8 608.1 L359.4 609.5 L360.9 606.9 L362.5 607.2 L364.0 607.2 L365.6 607.3 L367.1 607.6 L368.7 605.4 L370.2 607.6 L371.8 605.6 L373.3 606.9 L374.8 609.8 L376.4 606.8 L377.9 606.5 L379.5 607.3 L381.0 606.8 L382.6 605.7 L384.1 608.3 L385.7 606.1 L387.2 607.4 L388.8 606.0 L390.3 607.6 L391.9 607.0 L393.4 607.1 L395.0 606.8 L396.5 606.8 L398.1 606.7 L399.6 606.4 L401.1 605.7 L402.7 606.7 L404.2 607.5 L405.8 606.8 L407.3 606.7 L408.9 607.6 L410.4 605.7 L412.0 606.1 L413.5 606.6 L415.1 607.8 L416.6 607.4 L418.1 583.3 L419.6 607.0 L421.3 605.9 L422.8 579.5 L424.4 577.5 L425.9 577.0 L427.5 603.6 L429.0 602.4 L430.5 605.0 L432.1 602.1 L433.6 602.9 L435.2 600.4 L436.7 604.0 L438.3 601.8 L439.8 605.4 L441.4 603.2 L442.9 602.3 L444.5 604.4 L446.0 603.0 L447.6 603.7 L449.1 600.0 L450.7 601.1 L452.2 602.4 L453.8 601.3 L455.3 601.2 L456.8 601.6 L458.4 600.8 L459.9 601.0 L461.5 602.7 L463.0 600.8 L464.6 601.1 L466.1 601.0 L467.7 599.8 L469.2 597.9 L470.8 598.8 L472.3 600.9 L473.9 602.1 L475.7 606.3 L477.0 599.2 L478.4 550.2 L480.4 592.8 L481.6 595.2 L483.1 590.3 L484.7 594.6 L486.2 591.8 L487.8 591.8 L489.3 595.4 L490.9 594.4 L492.4 592.9 L494.0 591.4 L495.5 593.1 L497.0 562.3 L498.6 591.9 L500.2 593.4 L501.7 590.2 L503.3 594.2 L504.8 591.6 L506.4 591.9 L507.9 595.3 L509.4 592.5 L511.0 593.4 L512.5 596.0 L514.1 593.8 L515.6 594.6 L517.2 593.7 L518.7 594.4 L520.3 594.1 L521.8 593.7 L523.4 595.1 L524.9 594.9 L526.5 592.0 L528.0 595.1 L529.6 595.0 L531.1 591.5 L532.7 593.2 L534.2 596.1 L535.7 592.1 L537.3 595.8 L538.8 592.8 L540.4 594.4 L541.9 594.4 L543.5 590.6 L545.0 595.5 L546.6 595.2 L548.1 594.9 L549.7 594.4 L551.2 593.2 L552.8 586.9 L554.3 592.4 L555.9 596.2 L557.4 594.0 L559.0 592.2 L560.5 597.3 L562.0 595.2 L563.6 589.8 L565.1 592.2 L566.7 587.3 L568.2 588.8 L569.8 590.0 L571.3 595.3 L572.9 598.0 L574.4 596.8 L576.0 604.0 L577.5 596.7 L579.1 599.9 L580.6 597.7 L582.2 598.6 L583.7 599.4 L585.3 594.2 L586.8 600.7 L588.3 598.5 L589.9 597.1 L591.4 597.4 L593.0 594.6 L594.5 588.9 L596.1 598.3 L597.6 599.2 L599.2 596.1 L600.7 599.3 L602.3 597.4 L603.8 599.8 L605.4 596.4 L606.9 596.8 L608.5 597.8 L610.0 598.3 L611.6 598.3 L613.1 602.1 L614.7 599.3 L616.2 598.8 L617.7 598.8 L619.3 594.4 L620.8 599.3 L622.4 598.4 L623.9 600.4 L625.5 602.1 L627.0 602.3 L628.6 599.2 L630.1 594.4 L631.7 599.9 L633.2 598.5 L634.8 596.3 L636.3 598.5 L637.9 596.4 L639.4 596.5 L641.0 601.0 L642.5 598.8 L644.0 594.9 L645.6 597.5 L647.1 598.8 L648.7 600.5 L650.2 600.5 L651.8 597.0 L653.3 595.2 L654.9 595.9 L656.4 598.5 L658.0 598.9 L659.5 599.7 L661.1 599.1 L662.6 595.4 L664.2 597.3 L665.7 598.3 L667.3 597.2 L668.8 598.8 L670.3 596.6 L671.9 594.6 L673.4 603.8 L675.0 598.0 L676.5 598.6 L678.1 600.3 L679.6 597.6 L681.2 599.3 L682.7 599.9 L684.3 598.2 L685.8 594.3 L687.4 597.1 L688.9 599.8 L690.5 602.2 L692.0 599.7 L693.6 596.8 L695.1 600.5 L696.6 594.7 L698.2 601.7 L699.7 601.6 L701.3 597.6 L702.8 593.7 L704.4 599.8 L705.9 603.0 L707.5 598.0 L709.0 596.0 L710.6 602.5 L712.1 600.3 L713.7 596.1 L715.2 601.7 L716.8 607.7 L718.3 600.4 L719.9 599.4 L721.4 599.3 L722.9 601.2 L724.5 602.1 L726.0 601.0 L727.6 601.3 L729.1 601.2 L730.7 601.0 L732.2 600.7 L733.8 603.9 L735.3 596.5 L736.9 597.1 L738.4 598.8 L740.0 602.7 L741.5 605.2 L743.1 601.7 L744.6 599.0 L746.2 603.8 L747.7 598.7 L749.2 597.2 L750.8 600.6 L752.3 598.4 L753.9 602.0 L755.4 602.4 L757.0 592.7 L758.5 597.9 L760.1 603.7 L761.6 605.7 L763.2 596.7 L764.7 593.5 L766.3 600.2 L767.8 602.6 L769.4 598.0 L771.0 588.4 L772.5 596.5 L774.0 601.5 L775.6 599.7 L777.1 600.7 L778.6 601.0 L780.2 598.3 L781.7 597.3 L783.3 600.4 L784.8 600.5 L786.4 597.2 L787.9 599.1 L789.5 598.6 L791.0 602.1 L792.6 599.7 L794.1 600.7 L795.7 595.8 L797.2 599.0 L798.8 598.8 L800.3 595.4 L801.9 601.8 L803.4 598.7 L804.9 601.5 L806.5 598.6 L808.0 597.7 L809.6 598.9 L811.1 595.0 L812.7 600.2 L814.2 595.4 L815.8 600.1 L817.3 601.2 L818.9 602.3 L820.4 599.0 L822.0 594.7 L823.5 596.6 L825.1 597.6 L826.6 596.1 L828.2 599.9 L829.7 598.8 L831.2 598.4 L832.8 596.0 L834.3 596.6 L835.9 596.5 L837.4 602.6 L839.0 596.4 L840.5 602.8 L842.1 594.7 L843.6 595.9 L845.2 591.8 L846.7 597.2 L848.3 602.0 L849.8 600.9 L851.4 597.2 L852.9 595.9 L854.5 597.0 L856.0 600.1 L857.5 598.8 L859.1 599.3 L860.6 593.7 L862.2 596.9 L863.7 600.3 L865.3 595.1 L866.8 600.8 L868.4 599.8 L869.9 600.6 L871.5 601.1 L873.0 599.0 L874.6 601.9 L876.1 596.7 L877.7 599.5 L879.2 595.5 L880.8 598.3 L882.3 600.1 L883.8 597.0 L885.4 600.6 L886.9 595.0 L888.5 601.2 L890.0 597.3 L891.6 598.8 L893.1 595.9 L894.7 597.7 L896.2 591.3 L897.8 598.7 L899.3 600.2 L900.9 599.8 L902.4 598.7 L904.0 601.3 L905.5 596.6 L907.1 598.5 L908.6 596.1 L910.1 595.4 L911.7 596.3 L913.2 593.5 L914.8 599.5 L916.3 600.7 L917.9 596.6 L919.4 599.3 L921.0 595.8 L922.5 591.2 L924.1 594.6 L925.6 600.4 L927.2 600.7 L928.7 591.7 L930.3 593.9 L931.8 599.7 L933.4 596.3 L934.9 599.3 L936.4 596.0 L938.0 601.0 L939.5 595.4 L941.1 601.7 L942.6 589.5 L944.2 599.1 L945.7 604.2 L947.3 600.7 L948.8 599.3 L950.4 598.9 L951.9 597.7 L953.5 603.0 L955.0 595.1 L956.6 598.4 L958.1 602.8 L959.7 593.6 L961.2 596.7 L962.8 591.8 L964.3 598.7 L965.8 599.5 L967.4 597.5 L968.9 598.9 L970.5 596.3 L972.0 596.7 L973.6 599.3 L975.1 596.1 L976.7 599.1 L978.2 598.3 L979.8 600.6 L981.3 593.9 L982.9 595.8 L984.4 603.7 L986.0 597.8 L987.5 597.3 L989.1 597.7 L990.6 597.5 L992.1 597.4 L993.7 597.3 L995.2 595.1 L996.8 598.0 L998.3 598.2 L999.9 592.1 L1001.4 596.3 L1003.0 593.1 L1004.5 592.0 L1006.4 583.7 L1007.6 592.0 L1009.2 591.6 L1010.7 594.8 L1012.3 595.6 L1013.8 594.6 L1015.4 595.5 L1016.9 591.9 L1018.4 595.8 L1020.0 596.6 L1021.5 593.2 L1023.1 590.2 L1024.6 588.5 L1026.2 593.6 L1027.7 594.4 L1029.3 595.9 L1030.8 597.1 L1032.4 593.9 L1033.9 596.9 L1035.5 594.7 L1037.0 597.7 L1038.6 595.1 L1040.1 599.8 L1041.7 596.5 L1043.2 595.6 L1044.7 597.4 L1046.3 594.2 L1047.8 597.0 L1049.4 597.5 L1050.9 596.2 L1052.5 598.7 L1054.0 594.5 L1055.6 601.9 L1057.1 598.0 L1058.7 597.3 L1060.2 598.4 L1061.8 600.6 L1063.3 597.2 L1064.9 591.6 L1066.4 590.9 L1068.0 591.5 L1069.5 587.7 L1071.7 583.7 L1072.6 587.8 L1074.1 590.0 L1075.7 588.7 L1077.2 588.5 L1078.8 588.0 L1080.3 588.8 L1081.9 591.4 L1083.4 596.6 L1085.0 593.5 L1086.5 598.9 L1088.1 596.6 L1089.6 597.0 L1091.2 598.2 L1092.7 595.1 L1094.3 593.6 L1095.8 597.5 L1097.3 593.6 L1098.9 596.8 L1100.4 597.5 L1102.0 598.6 L1103.5 598.6 L1105.1 600.1 L1106.6 596.1 L1108.2 597.9 L1109.7 597.5 L1111.3 595.4 L1112.8 598.8 L1114.4 598.2 L1115.9 599.9 L1117.5 597.4 L1119.0 599.1 L1120.6 599.1 L1122.1 597.0 L1123.7 599.8 L1125.2 598.7 L1126.7 601.1 L1128.3 598.4 L1129.8 596.5 L1131.4 597.7 L1132.9 597.0 L1134.5 596.5 L1136.0 597.7 L1137.6 600.4 L1139.1 601.8 L1140.7 597.1 L1142.2 598.8 L1143.8 597.3 L1145.3 597.6 L1146.9 595.6 L1148.4 599.0 L1150.0 595.6 L1151.5 602.8 L1153.0 597.5 L1154.6 600.4 L1156.1 603.9 L1157.7 598.4 L1159.2 598.0 L1160.8 595.7 L1162.3 599.5 L1163.9 598.7 L1165.4 592.6 L1167.0 600.6 L1168.5 598.8 L1170.1 600.6 L1171.6 597.1 L1173.2 597.0 L1174.7 596.6 L1176.3 595.7 L1177.8 598.0 L1179.3 592.9 L1180.9 597.6 L1182.4 599.8 L1184.0 600.9 L1185.5 598.9 L1187.1 594.5 L1188.6 596.8 L1190.2 598.5 L1191.7 601.2 L1193.3 599.0 L1194.8 599.3 L1196.4 603.6 L1198.0 605.8 L1199.5 591.7 L1201.0 595.9 L1202.6 597.2 L1204.1 605.8 L1205.6 599.9 L1207.2 599.1 L1208.7 594.8 L1210.3 596.3 L1211.8 598.3 L1213.4 596.9 L1214.9 596.0 L1216.5 595.1 L1218.0 599.2 L1219.6 601.0 L1221.1 601.2 L1222.4 598.5 L1223.6 582.0 L1225.8 582.5 L1227.3 582.9 L1228.9 581.8 L1230.4 581.7 L1231.9 581.3 L1233.5 580.0 L1235.0 581.8 L1236.5 581.0 L1238.0 565.2 L1239.5 583.0 L1241.2 585.6 L1242.8 582.0 L1244.3 585.9 L1245.9 578.9 L1247.4 583.6 L1249.0 586.1 L1250.5 583.5 L1252.1 584.9 L1253.6 583.0 L1255.2 584.9 L1256.7 585.9 L1258.2 582.5 L1259.8 582.0 L1261.3 583.3 L1262.9 582.7 L1264.4 583.2 L1266.0 579.0 L1267.5 586.0 L1269.1 582.2 L1270.6 584.0 L1272.2 583.4 L1273.7 586.0 L1275.3 579.1 L1276.8 584.6 L1278.4 585.6 L1279.9 581.1 L1281.5 582.0 L1283.0 583.5 L1284.6 584.1 L1286.1 585.7 L1287.6 580.8 L1289.2 583.3 L1290.7 580.4 L1292.0 592.0 L1293.8 582.7 L1295.4 584.2 L1296.9 585.6 L1298.5 585.2 L1300.0 586.1 L1301.6 585.3 L1303.1 581.7 L1304.7 579.8 L1306.0 591.0 L1307.8 579.5 L1309.3 583.6 L1310.9 583.6 L1312.4 586.4 L1313.9 585.2 L1315.5 584.2 L1317.0 585.8 L1318.6 586.2 L1320.1 594.1 L1321.7 585.5 L1323.2 582.3 L1324.8 583.0 L1326.3 589.4 L1327.9 589.0 L1329.4 582.3 L1331.0 586.0 L1332.5 583.5 L1334.1 585.6 L1335.6 585.4 L1337.2 584.0 L1338.7 589.1 L1340.2 583.7 L1341.8 593.4 L1343.3 585.7 L1344.9 582.3 L1346.4 583.9 L1348.0 586.4 L1349.5 576.2 L1351.1 588.8 L1352.6 586.9 L1354.2 585.7 L1355.7 592.0 L1357.3 589.3 L1358.8 584.2 L1360.4 583.6 L1361.9 588.7 L1363.5 580.9 L1365.0 587.4" fill="none" stroke="#3b7ee8" stroke-width="1.4" stroke-linejoin="round"/>
<line x1="347" x2="1885" y1="402" y2="402" stroke="#f06a6a" stroke-width="2" stroke-dasharray="6 3"/>
<line x1="347" x2="1885" y1="402" y2="402" stroke="#a3e048" stroke-opacity=".85" stroke-width="2" stroke-dasharray="8 4"/>
<line x1="1365" x2="1365" y1="368" y2="628" stroke="#e0a36e" stroke-width="2" stroke-dasharray="5 3"/>
<path d="M1365.5 487 L1366 481 L1885 416" fill="none" stroke="#9ed43a" stroke-width="1.6" stroke-dasharray="4 3"/>
<path d="M1365 586 L1885 567" fill="none" stroke="#d9995b" stroke-width="2.2" stroke-dasharray="7 4"/>
</svg>
<div class="t mono" style="right:1579px;top:363px;font-size:9px;letter-spacing:-.4px;color:#aaa">82.8 cores</div>
<div class="t mono" style="right:1579px;top:433px;font-size:9px;letter-spacing:-.4px;color:#aaa">62.1 cores</div>
<div class="t mono" style="right:1579px;top:503px;font-size:9px;letter-spacing:-.4px;color:#aaa">41.4 cores</div>
<div class="t mono" style="right:1579px;top:573px;font-size:9px;letter-spacing:-.4px;color:#aaa">20.7 cores</div>
<div class="t mono" style="right:1579px;top:643px;font-size:9px;letter-spacing:-.4px;color:#aaa">0m</div>
<div class="t mono" style="left:347px;top:632px;font-size:9px;letter-spacing:-.4px;color:#aaa">03/17 17:00</div>
<div class="t mono" style="left:627px;top:632px;font-size:9px;letter-spacing:-.4px;color:#aaa">03/21 20:30</div>
<div class="t mono" style="left:935px;top:632px;font-size:9px;letter-spacing:-.4px;color:#aaa">03/26 00:00</div>
<div class="t mono" style="left:1241px;top:632px;font-size:9px;letter-spacing:-.4px;color:#aaa">03/30 06:00</div>
<div class="t mono" style="left:1549px;top:632px;font-size:9px;letter-spacing:-.4px;color:#aaa">04/03 09:30</div>
<div class="t mono" style="right:35px;top:632px;font-size:9px;letter-spacing:-.4px;color:#aaa">04/07 13:00</div>
<div class="a" style="left:291px;top:661px;width:12px;height:2px;background:#3b7ee8"></div>
<div class="t" style="left:307px;top:656px;font-size:11px;color:#888">Historical</div>
<svg class="a" style="left:366px;top:660px" width="12" height="3"><line x1="0" x2="12" y1="1.5" y2="1.5" stroke="#d9995b" stroke-width="1" stroke-dasharray="2.5 2"/></svg>
<div class="t sx" style="left:382px;top:656px;font-size:11px;color:#888;transform:scaleX(.9)">Resource Forecast</div>
<div class="a" style="left:480px;top:657px;width:12px;height:9px;background:#ecdccb;border:1px solid #e6cdb5;border-radius:2px"></div>
<div class="t sx" style="left:496px;top:656px;font-size:11px;color:#888;transform:scaleX(.915)">Confidence Band</div>
<svg class="a" style="left:588px;top:660px" width="12" height="3"><line x1="0" x2="12" y1="1.5" y2="1.5" stroke="#e53935" stroke-width="1" stroke-dasharray="2.5 2"/></svg>
<div class="t" style="left:604px;top:656px;font-size:11px;color:#888">Allocatable</div>
<svg class="a" style="left:670px;top:660px" width="12" height="3"><line x1="0" x2="12" y1="1.5" y2="1.5" stroke="#9ed43a" stroke-width="1" stroke-dasharray="2.5 2"/></svg>
<div class="t" style="left:686px;top:656px;font-size:11px;color:#888">What-if</div>


<!-- exhaustion card -->
<div class="a" style="left:274px;top:698px;width:810px;height:351px;border:1px solid #efb3b3;border-radius:8px;background:#f0e6e4"></div>
<svg class="a" style="left:291px;top:716px" width="14" height="14" viewBox="0 0 14 14"><circle cx="7" cy="7" r="6.5" fill="#e53935"/><rect x="6.1" y="3" width="1.8" height="5" fill="#fff"/><rect x="6.1" y="9.2" width="1.8" height="1.8" fill="#fff"/></svg>
<div class="t sb" style="left:315px;top:716px;font-size:15px;color:#4a4a4a">Exhaustion Forecast</div>
<div class="a" style="left:459px;top:714px;width:61px;height:17px;background:#f3cfcf;border-radius:3px"></div>
<div class="t sx" style="left:465px;top:717px;font-size:11px;color:#e53935;letter-spacing:.2px;-webkit-text-stroke:.3px #e53935;transform:scaleX(.93)">CRITICAL</div>
<svg class="a" style="left:290px;top:752px" width="18" height="20" viewBox="0 0 18 20"><path d="M13 3.2 L4.2 10 L13 16.8" fill="none" stroke="#e53935" stroke-width="3.4"/></svg>
<div class="t" style="left:318px;top:751px;font-size:25px;font-weight:bold;color:#e53935">1</div>
<div class="t" style="left:347px;top:751px;font-size:25px;font-weight:bold;color:#e53935">day</div>
<div class="t sx" style="left:397px;top:760px;font-size:13px;color:#888;transform:scaleX(.95)">until exhaustion</div>
<div class="t" style="left:291px;top:796px;font-size:12px;color:#7a7a7a">Exhaustion Date</div>
<div class="t" style="left:291px;top:817px;font-size:12px;color:#7a7a7a">Daily Growth</div>
<div class="t" style="left:291px;top:839px;font-size:12px;color:#7a7a7a">Weekly Growth</div>
<div class="t" style="left:291px;top:860px;font-size:12px;color:#7a7a7a">Current Usage</div>
<div class="t mono" style="right:853px;top:796px;font-size:11.6px;font-weight:bold;color:#2a2a2a">2026-03-31 13:30</div>
<div class="t mono" style="right:853px;top:817px;font-size:11.6px;font-weight:bold;color:#2a2a2a">462m <span style="font-weight:normal;color:#aaa;font-size:10px">(+3.6%)</span></div>
<div class="t mono" style="right:853px;top:839px;font-size:11.6px;font-weight:bold;color:#2a2a2a">3.23 cores</div>
<div class="t mono" style="right:853px;top:860px;font-size:11.6px;font-weight:bold;color:#2a2a2a">12.88 cores / 72 cores <span style="font-weight:normal;color:#aaa;font-size:10px">(17.9%)</span></div>
<div class="a" style="left:291px;top:887px;width:776px;height:31px;background:#e8e1df;border-radius:4px"></div>
<svg class="a" style="left:302px;top:895px" width="12" height="14" viewBox="0 0 12 14"><path d="M6 1a4 4 0 0 0-2.3 7.3V10h4.6V8.3A4 4 0 0 0 6 1z M4 11.5h4 M4.5 13h3" fill="none" stroke="#777" stroke-width="1.1"/></svg>
<div class="t" style="left:319px;top:897px;font-size:12px;color:#666">Immediate action required: predicted to exceed 60% capacity within 7 days</div>

<!-- what-if card -->
<div class="card" style="left:1092px;top:698px;width:810px;height:351px"></div>
<svg class="a" style="left:1109px;top:720px" width="16" height="16" viewBox="0 0 16 16"><path d="M5.5 1.5h5 M6.2 1.5v5L2 14h12L9.8 6.5v-5 M4 10.5h8" fill="none" stroke="#8bc34a" stroke-width="1.4" stroke-linejoin="round"/></svg>
<div class="t sb" style="left:1133px;top:721px;font-size:15px;color:#4a4a4a">What-if Simulation</div>
<div class="a" style="left:1265px;top:720px;width:49px;height:17px;background:#e4eed3;border-radius:3px"></div>
<div class="t" style="left:1271px;top:723px;font-size:11px;color:#86d43a;letter-spacing:.4px;-webkit-text-stroke:.4px #86d43a">ACTIVE</div>
<div class="a" style="left:1817px;top:713px;width:68px;height:30px;border:1px solid #c4c4c4;border-radius:4px"></div>
<div class="t" style="left:1833px;top:722px;font-size:13px;color:#333">Reset</div>
<div class="t" style="left:1109px;top:760px;font-size:12px;color:#777">Request Adjustment</div>
<div class="t mono" style="left:1227px;top:760px;font-size:11.5px;font-weight:bold;color:#ff9800">+250%</div>
<div class="a" style="left:1109px;top:792px;width:776px;height:6px;border-radius:3px;background:#bdbdbd"></div>
<div class="a" style="left:1109px;top:792px;width:665px;height:6px;border-radius:3px;background:#ff9800"></div>
<div class="a" style="left:1758px;top:779px;width:32px;height:32px;border-radius:16px;background:rgba(255,152,0,.15)"></div>
<div class="a" style="left:1763px;top:784px;width:22px;height:22px;border-radius:11px;background:#ff9800"></div>
<div class="a" style="left:1749px;top:750px;width:50px;height:24px;border-radius:3px;background:#676767"></div>
<div class="a" style="left:1769px;top:773px;width:0;height:0;border-left:5px solid transparent;border-right:5px solid transparent;border-top:5px solid #676767"></div>
<div class="t" style="left:1755px;top:756px;font-size:12px;color:#fff">+250%</div>
<div class="t" style="left:1109px;top:815px;font-size:9px;color:#a8a8a8">-50%</div>
<div class="t" style="left:1491px;top:815px;font-size:9px;color:#a8a8a8">0</div>
<div class="t" style="right:35px;top:815px;font-size:9px;color:#a8a8a8">+300%</div>
<div class="t" style="left:1109px;top:842px;font-size:12px;color:#777">Node Adjustment</div>
<div class="a" style="left:1403px;top:861px;width:40px;height:40px;border-radius:20px;border:1px solid #e53935"></div>
<div class="a" style="left:1417.5px;top:880.3px;width:11px;height:1.3px;background:#e53935"></div>
<div class="t" style="left:1453px;top:873px;font-size:15px;color:#444">7</div><svg class="a" style="left:1469px;top:874px" width="12" height="12" viewBox="0 0 12 12"><path d="M1 6h9.5M6.5 2l4 4-4 4" fill="none" stroke="#444" stroke-width="1.3"/></svg><div class="t" style="left:1487px;top:873px;font-size:15px;color:#333;-webkit-text-stroke:.6px #333">7</div><div class="t" style="left:1501px;top:873px;font-size:15px;color:#444">nodes</div>
<div class="a" style="left:1551px;top:861px;width:40px;height:40px;border-radius:20px;border:1px solid #43a047"></div>
<div class="a" style="left:1565.5px;top:880.3px;width:11px;height:1.3px;background:#43a047"></div>
<div class="a" style="left:1570.35px;top:875.4px;width:1.3px;height:11px;background:#43a047"></div>
<div class="a" style="left:1109px;top:915px;width:776px;height:1px;background:#dcdcda"></div>
<div class="t" style="left:1109px;top:929px;font-size:12px;color:#777">Simulated Impact</div>
<div class="t" style="left:1109px;top:949px;font-size:12px;color:#888">Allocatable</div>
<div class="t" style="left:1109px;top:971px;font-size:12px;color:#888">Exhaustion Shift</div>
<div class="t mono" style="right:35px;top:949px;font-size:11.6px;font-weight:bold;color:#2a2a2a">72 cores</div>
<div class="t mono" style="right:35px;top:971px;font-size:11.6px;font-weight:bold;color:#26b37a">Still safe</div>
<svg class="a" style="left:1820px;top:910px" width="62" height="76" viewBox="0 0 62 76">
<defs><radialGradient id="rh" cx=".4" cy=".35" r=".7"><stop offset="0" stop-color="#fbf6f1"/><stop offset=".75" stop-color="#f1e4d8"/><stop offset="1" stop-color="#dcc4b2"/></radialGradient>
<linearGradient id="rr" x1="0" y1="0" x2="0" y2="1"><stop offset="0" stop-color="#f0492c"/><stop offset="1" stop-color="#d8301c"/></linearGradient></defs>
<path d="M12 37 L24 46" stroke="#efe3d8" stroke-width="6" stroke-linecap="round"/>
<ellipse cx="35" cy="49" rx="15" ry="11.5" fill="url(#rh)"/>
<path d="M21 53 Q35 63 49 53 L37 70 Q35 73 33 70 Z" fill="url(#rr)"/>
<path d="M25 37 Q35 41 45 37 L41 44 Q35 46 29 44 Z" fill="#e8391f"/>
<path d="M27 55 L30.5 47.5 L34 55 M35.5 55 L33.5 51" stroke="#e8391f" stroke-width="2.2" fill="none"/><circle cx="37" cy="48.5" r="1.3" fill="#e8391f"/><path d="M38 55 L36.5 51.5" stroke="#e8391f" stroke-width="2.2"/>
<ellipse cx="52.5" cy="55" rx="3.6" ry="5" fill="#e8391f"/>
<path d="M38 4 C47 5 53 14 53 25 C53 33 46 37.5 36 37.5 C26 37.5 18 33 18 26 C18 15 28 4 38 4 Z" fill="url(#rh)"/>
<path d="M29.5 13.7 L32.5 9 L35.5 13.7 Z" fill="#e8391f"/>
<ellipse cx="51.3" cy="24.5" rx="2" ry="5.5" fill="#e8391f"/>
<rect x="20" y="17" width="27" height="18" rx="9" fill="#1d1715"/>
<ellipse cx="25.7" cy="26" rx="2.6" ry="4.3" fill="#19e6ee"/>
<ellipse cx="39.5" cy="26" rx="2.6" ry="4.3" fill="#19e6ee"/>
<ellipse cx="10.5" cy="33.5" rx="4.6" ry="7" transform="rotate(-18 10.5 33.5)" fill="#e8391f"/>
</svg>
<div class="a" style="left:1109px;top:999px;width:776px;height:35px;background:#f5dcdc;border:1px solid #efb1b1;border-radius:4px"></div>
<svg class="a" style="left:1120px;top:1008px" width="14" height="14" viewBox="0 0 14 14"><circle cx="7" cy="7" r="6.3" fill="#e53935"/><rect x="6.1" y="3" width="1.8" height="5" fill="#fff"/><rect x="6.1" y="9.2" width="1.8" height="1.8" fill="#fff"/></svg>
<div class="t sx" style="left:1144px;top:1010px;font-size:12px;color:#e53935;-webkit-text-stroke:.35px #e53935;transform:scaleX(.9)">CRITICAL</div>
<div class="t" style="left:1199px;top:1011px;font-size:12px;color:#555">Immediate action required: predicted to exceed 60% capacity within 7 days</div>

<!-- summary -->
<div class="card" style="left:274px;top:1065px;width:1628px;height:72px"></div>
<svg class="a" style="left:291px;top:1081px" width="13" height="13" viewBox="0 0 13 13"><rect x="1" y="1" width="11" height="11" fill="none" stroke="#888" stroke-width="1"/><path d="M3 4h7M3 6.5h7M3 9h5" stroke="#888" stroke-width="1"/></svg>
<div class="t sb sx" style="left:310px;top:1081px;font-size:15px;color:#4a4a4a;transform:scaleX(.94)">Summary</div>
<div class="t" style="left:291px;top:1108px;font-size:13px;color:#555">ARIMA 알고리즘, 659개 데이터 포인트 <span style="display:inline-block;width:12px;height:9px;vertical-align:0;position:relative"><svg style="position:absolute;left:0;top:0" width="12" height="9" viewBox="0 0 12 9"><path d="M0 4.5h11M8 1.5l3 3-3 3" fill="none" stroke="#555" stroke-width="1"/></svg></span> 336개 예측 (신뢰도: 95%)</div>

</body></html>
